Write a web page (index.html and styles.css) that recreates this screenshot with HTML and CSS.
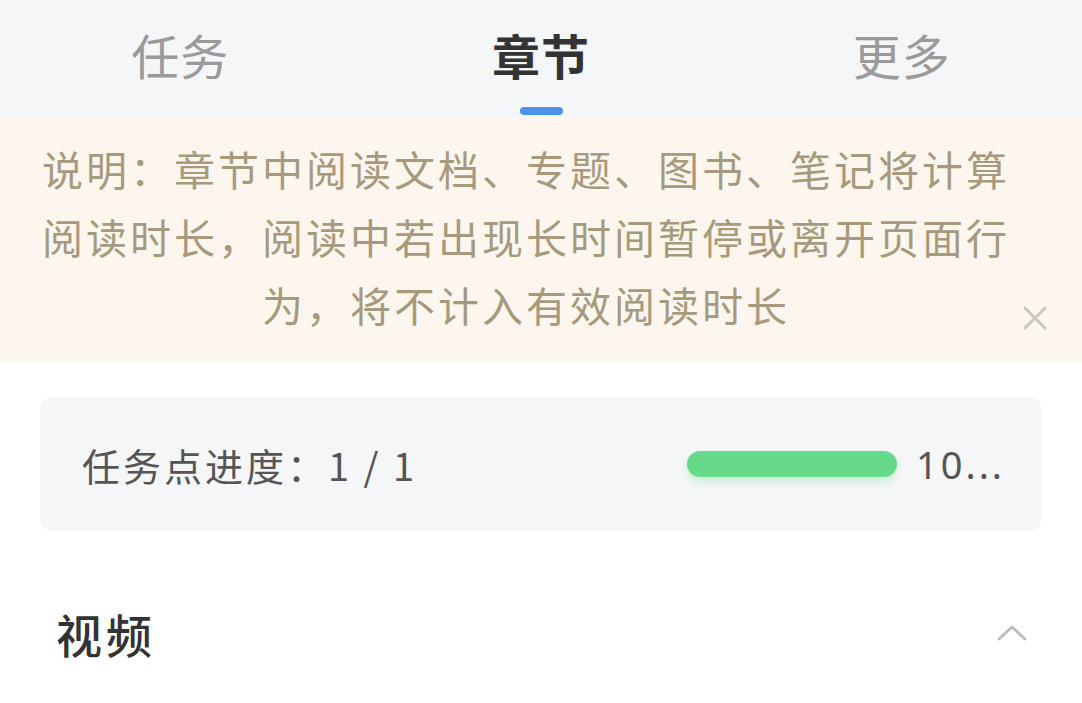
FILE: index.html
```html
<!DOCTYPE html>
<html lang="zh-CN">
<head>
<meta charset="utf-8">
<title>章节</title>
<link rel="stylesheet" href="styles.css">
</head>
<body>
<div class="tabs">
  <div class="tab"><span class="tab-text">任务</span></div>
  <div class="tab active"><span class="tab-text">章节</span><span class="indicator"></span></div>
  <div class="tab"><span class="tab-text">更多</span></div>
</div>
<div class="notice">
  <p class="notice-text">说明：章节中阅读文档、专题、图书、笔记将计算阅读时长，阅读中若出现长时间暂停或离开页面行为，将不计入有效阅读时长</p>
  <svg class="close" width="26" height="26" viewBox="0 0 26 26"><path d="M3 3L23 23M23 3L3 23" stroke="#cbc6be" stroke-width="3" stroke-linecap="round" fill="none"/></svg>
</div>
<div class="card">
  <span class="card-label">任务点进度：1 / 1</span>
  <span class="bar"><span class="bar-fill" style="width:100%"></span></span>
  <span class="card-value">10...</span>
</div>
<div class="section">
  <span class="section-title">视频</span>
  <svg class="chevron" width="32" height="18" viewBox="0 0 32 18"><polyline points="3,15 16,3 29,15" stroke="#bdbdbd" stroke-width="3" fill="none" stroke-linecap="round" stroke-linejoin="round"/></svg>
</div>
</body>
</html>
```

FILE: styles.css
```css
html, body {
  margin: 0;
  padding: 0;
  background: #ffffff;
}
body {
  width: 1082px;
  height: 703px;
  overflow: hidden;
  font-family: "Noto Sans CJK SC", "Noto Sans", sans-serif;
}
.tabs {
  display: flex;
  height: 117px;
  background: #f5f6f8;
}
.tab {
  flex: 1;
  display: flex;
  flex-direction: column;
  align-items: center;
  padding-top: 30px;
  box-sizing: border-box;
}
.tab-text {
  font-size: 48px;
  line-height: 48px;
  letter-spacing: 1px;
  color: #9a9a9a;
}
.tab.active .tab-text {
  color: #333333;
  font-weight: 700;
}
.indicator {
  display: block;
  width: 43px;
  height: 8px;
  margin-top: 29px;
  border-radius: 4px;
  background: #4a93e8;
}
.notice {
  position: relative;
  background: #fdf6ee;
  padding: 17px 70px 20px 40px;
  height: 245px;
  box-sizing: border-box;
}
.notice-text {
  margin: 0;
  font-size: 41px;
  line-height: 68px;
  letter-spacing: 3px;
  color: #a79a7c;
  text-align: center;
}
.close {
  position: absolute;
  right: 34px;
  top: 188px;
}
.card {
  display: flex;
  align-items: center;
  margin: 35px 40px 0 40px;
  height: 134px;
  padding: 0 42px;
  background: #f5f6f8;
  border-radius: 14px;
}
.card-label {
  flex: 1;
  font-size: 38px;
  letter-spacing: 3px;
  color: #555555;
  white-space: nowrap;
}
.bar {
  display: block;
  width: 210px;
  height: 26px;
  border-radius: 13px;
  background: #e6e8eb;
  box-shadow: 0 5px 8px rgba(102, 217, 138, 0.3);
}
.bar-fill {
  display: block;
  height: 100%;
  border-radius: 13px;
  background: #66da8a;
}
.card-value {
  width: 84px;
  margin-left: 19px;
  font-family: "Noto Sans", "Noto Sans CJK SC", sans-serif;
  font-size: 38px;
  letter-spacing: 3px;
  color: #555555;
  white-space: nowrap;
}
.section {
  display: flex;
  align-items: center;
  justify-content: space-between;
  height: 64px;
  margin-top: 70px;
  padding: 0 54px 0 56px;
}
.section-title {
  font-size: 46px;
  letter-spacing: 4px;
  font-weight: 500;
  color: #333333;
}
.chevron {
  display: block;
}
```
